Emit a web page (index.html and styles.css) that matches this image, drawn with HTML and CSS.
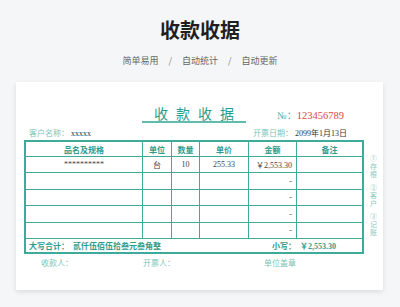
FILE: index.html
```html
<!DOCTYPE html>
<html lang="zh-CN">
<head>
<meta charset="utf-8">
<link rel="stylesheet" href="styles.css">
</head>
<body>
<header class="hero">
  <h1 class="hero-title">收款收据</h1>
  <p class="hero-sub"><span>简单易用</span><span class="sep">/</span><span>自动统计</span><span class="sep">/</span><span>自动更新</span></p>
</header>
<section class="card">
  <div class="main">
    <div class="title-row">
      <div class="r-title">收款收据</div>
      <div class="r-no"><span class="no-label">№：</span><span class="no-val">123456789</span></div>
    </div>
    <div class="info-row">
      <div><span class="lbl">客户名称：</span><span class="val">xxxxx</span></div>
      <div><span class="lbl">开票日期：</span><span class="val">2099年1月13日</span></div>
    </div>
    <div class="grid">
      <div class="th">品名及规格</div>
      <div class="th">单位</div>
      <div class="th">数量</div>
      <div class="th">单价</div>
      <div class="th">金额</div>
      <div class="th">备注</div>

      <div class="td c">**********</div>
      <div class="td c">台</div>
      <div class="td c">10</div>
      <div class="td c">255.33</div>
      <div class="td r">￥2,553.30</div>
      <div class="td"></div>

      <div class="td"></div><div class="td"></div><div class="td"></div><div class="td"></div><div class="td r">-</div><div class="td"></div>
      <div class="td"></div><div class="td"></div><div class="td"></div><div class="td"></div><div class="td r">-</div><div class="td"></div>
      <div class="td"></div><div class="td"></div><div class="td"></div><div class="td"></div><div class="td r">-</div><div class="td"></div>
      <div class="td"></div><div class="td"></div><div class="td"></div><div class="td"></div><div class="td r">-</div><div class="td"></div>

      <div class="total">
        <div><span>大写合计：</span><span class="cn-amt">贰仟伍佰伍拾叁元叁角整</span></div>
        <div class="small-amt"><span>小写：</span><span>￥2,553.30</span></div>
      </div>
    </div>
    <div class="foot">
      <span>收款人：</span>
      <span>开票人：</span>
      <span>单位盖章</span>
    </div>
  </div>
  <aside class="side">
    <span class="vt">①存根</span>
    <span class="vt">②客户</span>
    <span class="vt">③记账</span>
  </aside>
</section>
</body>
</html>
```
FILE: styles.css
```css
* { box-sizing: border-box; margin: 0; padding: 0; }
html, body { background: #f5f6f8; }
body {
  width: 400px;
  height: 307px;
  overflow: hidden;
  font-family: "Noto Sans CJK SC", "Noto Sans", sans-serif;
}
.hero { text-align: center; padding-top: 16px; }
.hero-title {
  font-size: 20px;
  line-height: 28px;
  font-weight: 700;
  color: #1f1f1f;
}
.hero-sub {
  margin-top: 10px;
  font-size: 9px;
  line-height: 14px;
  color: #666;
  display: flex;
  justify-content: center;
}
.hero-sub .sep { margin: 0 10px; color: #888; }

.card {
  margin: 14px 0 0 16px;
  width: 367px;
  height: 208px;
  background: #fff;
  box-shadow: 0 2px 5px rgba(0,0,0,0.10);
  display: flex;
  padding: 23px 0 0 8px;
}
.main { width: 340px; display: flex; flex-direction: column; }

.title-row {
  display: grid;
  grid-template-columns: 1fr auto 1fr;
  align-items: end;
  height: 18px;
}
.r-title {
  grid-column: 2;
  font-size: 14px;
  line-height: 16px;
  letter-spacing: 8px;
  padding: 0 4px 0 12px;
  color: #2a9d8c;
  border-bottom: 2px solid #5fbcae;
}
.r-no {
  grid-column: 3;
  justify-self: end;
  margin-right: 20px;
  margin-bottom: 1px;
  font-family: "Liberation Serif", "Noto Sans CJK SC", serif;
  font-size: 10.5px;
  line-height: 12px;
}
.no-label { color: #4fb3a4; font-size: 10px; }
.no-val { color: #e04848; }

.info-row {
  margin-top: 4px;
  height: 11px;
  display: flex;
  justify-content: space-between;
  padding: 0 17px 0 5px;
  font-size: 8px;
  line-height: 11px;
}
.lbl { color: #7cc4b6; }
.val { color: #333; font-family: "Liberation Serif", "Noto Sans CJK SC", serif; margin-left: 2px; }

.grid {
  margin-top: 2px;
  display: grid;
  grid-template-columns: 116px 28px 27px 48px 47px 65px;
  grid-template-rows: 14px 15px 16px 15px 16px 15px 13px;
  gap: 1px;
  background: #3eaa9b;
  border: 2px solid #3eaa9b;
}
.th, .td, .total { background: #fff; }
.th {
  font-size: 8px;
  font-weight: 700;
  color: #2e9c8c;
  display: flex;
  align-items: center;
  justify-content: center;
}
.td {
  font-family: "Liberation Serif", "Noto Sans CJK SC", serif;
  font-size: 8px;
  color: #444;
  display: flex;
  align-items: center;
}
.td.c { justify-content: center; }
.td.r { justify-content: flex-end; padding-right: 4px; }
.total {
  grid-column: 1 / -1;
  display: flex;
  justify-content: space-between;
  align-items: center;
  padding: 0 26px 0 3px;
  font-size: 8px;
  font-weight: 700;
  color: #2e9c8c;
}
.cn-amt { margin-left: 4px; }
.small-amt span + span { margin-left: 4px; font-family: "Liberation Serif", "Noto Sans CJK SC", serif; }

.foot {
  margin-top: 3px;
  display: grid;
  grid-template-columns: 102px 121px auto;
  padding-left: 17px;
  font-size: 8px;
  line-height: 12px;
  color: #7cc4b6;
}

.side {
  width: 19px;
  padding-top: 50px;
  display: flex;
  flex-direction: column;
  align-items: center;
  gap: 5px;
}
.vt {
  writing-mode: vertical-rl;
  text-orientation: upright;
  font-size: 7px;
  line-height: 8px;
  letter-spacing: 1px;
  color: #8cc9bd;
}
```
